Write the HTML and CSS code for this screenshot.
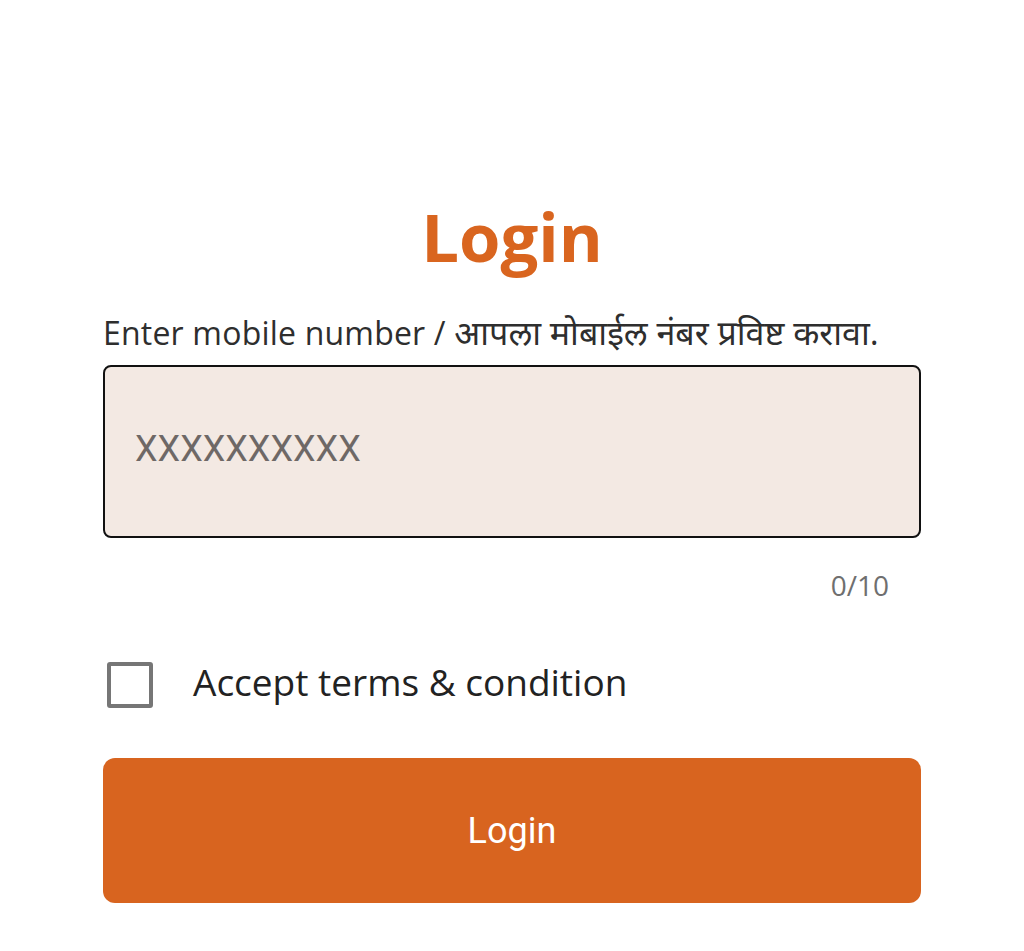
FILE: index.html
```html
<!DOCTYPE html>
<html lang="mr">
<head>
  <meta charset="UTF-8">
  <meta name="viewport" content="width=device-width, initial-scale=1.0">
  <title>Login</title>
  <link rel="stylesheet" href="styles.css">
</head>
<body>
  <main class="login">
    <h1 class="login-title">Login</h1>

    <label class="field-label" for="mobile">Enter mobile number / <span class="mr">आपला मोबाईल नंबर प्रविष्ट करावा.</span></label>
    <div class="input-box">
      <input id="mobile" type="tel" maxlength="10" placeholder="XXXXXXXXXX">
    </div>
    <div class="counter">0/10</div>

    <label class="terms">
      <span class="checkbox"></span>
      <span class="terms-text">Accept terms &amp; condition</span>
    </label>

    <button class="login-btn">Login</button>
  </main>
</body>
</html>
```

FILE: styles.css
```css
* { margin: 0; padding: 0; box-sizing: border-box; }
body {
  font-family: 'Open Sans', 'Noto Sans', sans-serif;
  background: #fff; color: #2b2b2b;
}

.login {
  width: 818px; margin-left: 103px; padding-top: 197px;
  display: flex; flex-direction: column;
}

.login-title {
  text-align: center; color: #d9651f;
  font-size: 67px; line-height: 78px; font-weight: 700;
}

.field-label {
  margin-top: 40px; height: 36px;
  font-size: 32px; line-height: 36px; color: #2e2e2e;
  letter-spacing: 0.2px; white-space: nowrap;
}

.field-label .mr { font-size: 34px; line-height: 1; letter-spacing: 0; }

.input-box {
  margin-top: 14px; height: 173px;
  background: #f3e9e3; border: 2px solid #111; border-radius: 8px;
  display: flex; align-items: center;
  padding: 0 30px 6px;
}

.input-box input {
  width: 100%; border: none; outline: none; background: transparent;
  font-family: Roboto, sans-serif; font-size: 36px; color: #333;
}

.input-box input::placeholder { color: #6e6866; }

.counter {
  margin-top: 31px; align-self: flex-end; margin-right: 32px;
  font-size: 28px; line-height: 32px; color: #6f6f6f;
}

.terms {
  margin-top: 61px; display: flex; align-items: center; gap: 40px;
  font-size: 37px; line-height: 40px; color: #222;
}

.terms-text { padding-bottom: 6px; }

.checkbox {
  width: 46px; height: 46px; margin-left: 4px;
  border: 4px solid #767676; border-radius: 3px;
}

.login-btn {
  margin-top: 50px; height: 145px;
  background: #d8641f; color: #fff; border: none; border-radius: 12px;
  font-family: Roboto, sans-serif; font-size: 36px;
  cursor: pointer;
}
```
